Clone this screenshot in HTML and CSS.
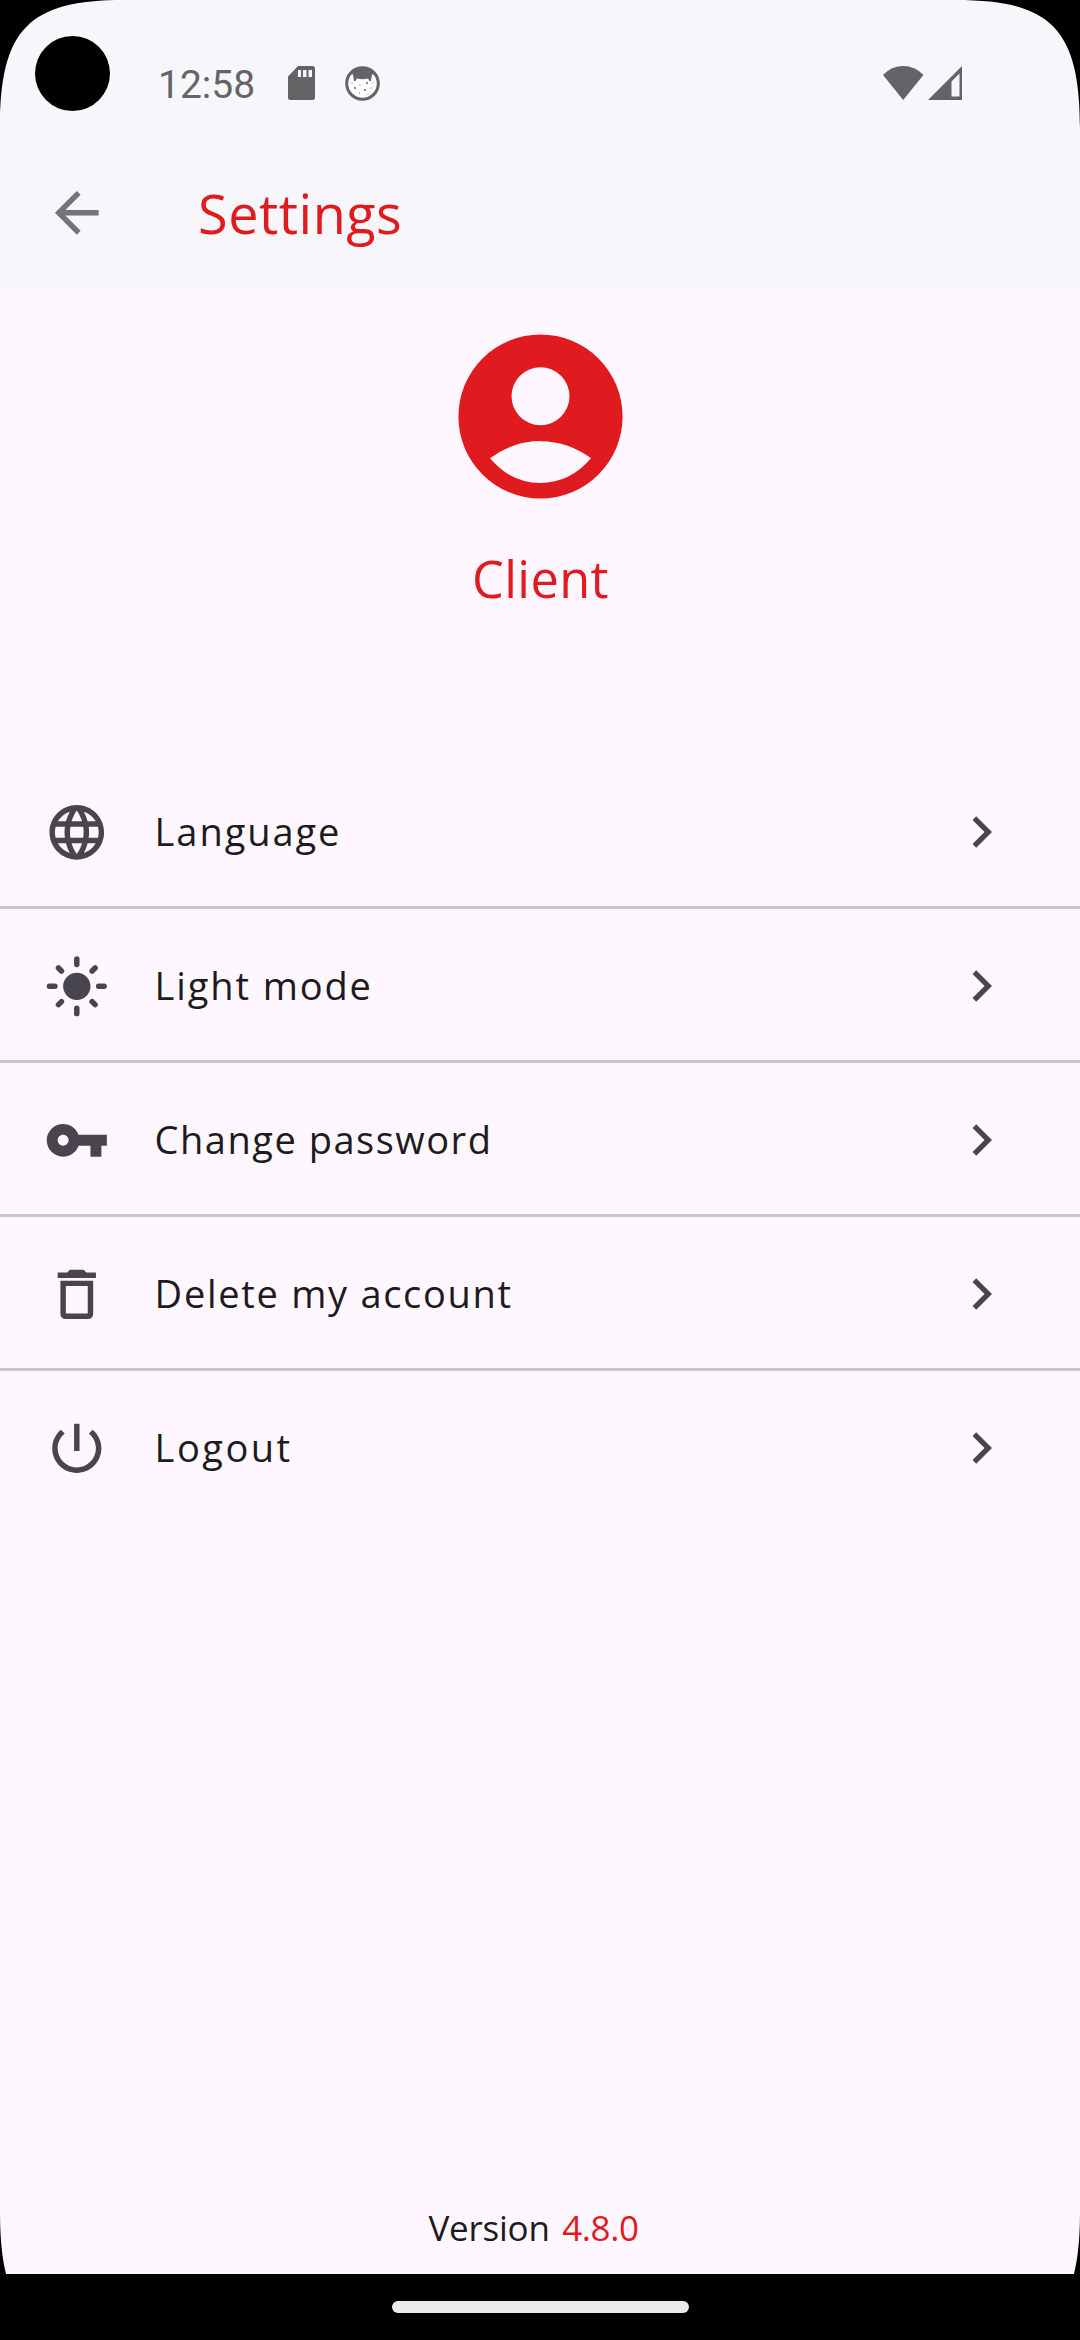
FILE: index.html
```
<!DOCTYPE html>
<html lang="en">
<head>
<meta charset="utf-8">
<title>Settings</title>
<link rel="stylesheet" href="styles.css">
</head>
<body>
<div class="screen">
  <header class="header">
    <div class="status-bar">
      <span class="clock">12:58</span>
      <svg class="sd-card" viewBox="0 0 27 34"><path fill-rule="evenodd" d="M10 0H24.5Q27 0 27 2.5V31.500Q27 34 24.500 34H2.500Q0 34 0 31.500V10.500ZM10 4V11H13V4ZM15 4V11H18.500V4ZM20.500 4V11H24V4Z"/></svg>
      <svg class="face" viewBox="0 0 35 35">
        <circle cx="17.500" cy="17.500" r="15.800" fill="#fdfdff" stroke="#646466" stroke-width="3"/>
        <path d="M4 8Q17.500-4.500 31 8L27 8.500 26 15H24.500L23 12.500Q17.500 14 12 12.500L10.500 15H9L8 8.500Z"/>
        <circle cx="22" cy="17" r="1"/><circle cx="10" cy="22" r="1"/><circle cx="20" cy="24" r="1"/><circle cx="15" cy="19" r=".6"/><circle cx="26" cy="22" r=".6"/><circle cx="14.500" cy="27" r=".6"/><circle cx="7" cy="17" r=".6"/><circle cx="23" cy="28" r=".5"/><circle cx="28" cy="17" r=".5"/>
      </svg>
      <svg class="wifi" viewBox="0 0 40.400 34"><path d="M20.200 34 0 9Q8.500 0 20.200 0T40.400 9Z"/></svg>
      <svg class="signal" viewBox="0 0 34 34"><path fill-rule="evenodd" d="M34 0V34H0ZM31.500 7.500 23.500 15.500V30.500H31.500Z"/></svg>
    </div>
    <div class="app-bar">
      <svg class="back" viewBox="0 0 24 24"><path d="M20 11H7.830l5.590-5.590L12 4l-8 8 8 8 1.410-1.410L7.830 13H20v-2z"/></svg>
      <h1 class="title">Settings</h1>
    </div>
  </header>

  <main class="content">
    <section class="profile">
      <svg class="avatar" viewBox="0 0 24 24"><path fill-rule="evenodd" d="M12 2a10 10 0 1 0 0 20a10 10 0 1 0 0-20ZM12 6a3.530 3.530 0 1 1 0 7.060a3.530 3.530 0 1 1 0-7.060ZM5.850 17.100q1.275-.975 2.850-1.538T12 15q1.725 0 3.300.563t2.850 1.537Q15.600 20.100 12 20.100T5.850 17.100Z"/></svg>
      <div class="name">Client</div>
    </section>

    <nav class="menu">
      <div class="item">
        <svg class="icon" viewBox="0 0 24 24"><path d="M11.990 2C6.470 2 2 6.480 2 12s4.470 10 9.990 10C17.520 22 22 17.520 22 12S17.520 2 11.990 2zm6.930 6h-2.950c-.32-1.250-.78-2.450-1.380-3.560 1.840.63 3.370 1.910 4.330 3.560zM12 4.040c.83 1.200 1.480 2.530 1.910 3.960h-3.820c.43-1.430 1.080-2.760 1.910-3.960zM4.260 14C4.100 13.360 4 12.690 4 12s.1-1.360.26-2h3.380c-.08.66-.14 1.320-.14 2s.06 1.340.14 2H4.260zm.82 2h2.950c.32 1.250.78 2.450 1.380 3.560-1.840-.63-3.370-1.900-4.330-3.560zm2.950-8H5.080c.96-1.660 2.490-2.930 4.330-3.560C8.810 5.550 8.350 6.750 8.030 8zM12 19.960c-.83-1.200-1.480-2.530-1.910-3.960h3.820c-.43 1.430-1.080 2.760-1.910 3.960zM14.340 14H9.660c-.09-.66-.16-1.320-.16-2s.07-1.350.16-2h4.680c.09.650.16 1.320.16 2s-.07 1.340-.16 2zm.25 5.560c.6-1.110 1.060-2.310 1.380-3.560h2.950c-.96 1.650-2.490 2.930-4.330 3.560zM16.360 14c.08-.66.14-1.320.14-2s-.06-1.340-.14-2h3.380c.16.64.26 1.310.26 2s-.1 1.360-.26 2h-3.380z"/></svg>
        <span class="label label-language">Language</span>
        <svg class="chevron" viewBox="0 0 24 24"><path d="M10 6 8.590 7.410 13.170 12l-4.580 4.590L10 18l6-6z"/></svg>
      </div>
      <div class="item">
        <svg class="icon" viewBox="0 0 24 24"><circle cx="12" cy="12" r="5"/><path fill="none" stroke="#49454f" stroke-width="2" stroke-linecap="round" d="M12 2V4M12 20V22M2 12H4M20 12H22M5.300 5.300 6.400 6.400M17.600 17.600 18.700 18.700M18.700 5.300 17.600 6.400M6.400 17.600 5.300 18.700"/></svg>
        <span class="label label-mode">Light mode</span>
        <svg class="chevron" viewBox="0 0 24 24"><path d="M10 6 8.590 7.410 13.170 12l-4.580 4.590L10 18l6-6z"/></svg>
      </div>
      <div class="item">
        <svg class="icon" viewBox="0 0 24 24"><path d="M12.650 10C11.830 7.670 9.610 6 7 6c-3.310 0-6 2.690-6 6s2.690 6 6 6c2.610 0 4.830-1.670 5.650-4H17v4h4v-4h2v-4H12.650zM7 14c-1.100 0-2-.9-2-2s.9-2 2-2 2 .9 2 2-.9 2-2 2z"/></svg>
        <span class="label label-password">Change password</span>
        <svg class="chevron" viewBox="0 0 24 24"><path d="M10 6 8.590 7.410 13.170 12l-4.580 4.590L10 18l6-6z"/></svg>
      </div>
      <div class="item">
        <svg class="icon" viewBox="0 0 24 24"><path fill-rule="evenodd" d="M5 4H8.500L9.500 3H14.500L15.500 4H19V6H5ZM6 7H18V19Q18 21 16 21H8Q6 21 6 19ZM8 9V19H16V9Z"/></svg>
        <span class="label label-delete">Delete my account</span>
        <svg class="chevron" viewBox="0 0 24 24"><path d="M10 6 8.590 7.410 13.170 12l-4.580 4.590L10 18l6-6z"/></svg>
      </div>
      <div class="item">
        <svg class="icon" viewBox="0 0 24 24"><path d="M13 3h-2v10h2V3zm4.830 2.170-1.420 1.420C17.990 7.860 19 9.810 19 12c0 3.870-3.130 7-7 7s-7-3.130-7-7c0-2.190 1.010-4.140 2.580-5.420L6.170 5.170C4.230 6.820 3 9.260 3 12c0 4.970 4.030 9 9 9s9-4.030 9-9c0-2.740-1.230-5.180-3.170-6.830z"/></svg>
        <span class="label label-logout">Logout</span>
        <svg class="chevron" viewBox="0 0 24 24"><path d="M10 6 8.590 7.410 13.170 12l-4.580 4.590L10 18l6-6z"/></svg>
      </div>
    </nav>

    <footer class="version"><span>Version</span><span class="number">4.8.0</span></footer>
  </main>

  <div class="nav-bar"><div class="handle"></div></div>

  <svg class="bezel" viewBox="0 0 1080 2340">
    <path d="M0 0H124C29 0 0 29 0 128ZM1080 0H956C1051 0 1080 29 1080 128ZM0 2340V2212C0 2311 29 2340 124 2340ZM1080 2340V2212C1080 2311 1051 2340 956 2340Z"/>
    <circle cx="72.500" cy="73.500" r="37.500"/>
  </svg>
</div>
</body>
</html>
```
FILE: styles.css
```
* {
  box-sizing: border-box;
}

body {
  margin: 0;
  font-family: "Open Sans", "Noto Sans", sans-serif;
  color: #1d1b20;
}

svg {
  display: block;
  flex: none;
}

.screen {
  position: relative;
  display: flex;
  flex-direction: column;
  width: 1080px;
  height: 2340px;
  background: #fef7ff;
  overflow: hidden;
}

.header {
  height: 289px;
  background: #f7f7fb;
}

.status-bar {
  display: flex;
  align-items: center;
  height: 137px;
  padding: 29px 118px 0 158px;
  fill: #646466;
}

.clock {
  width: 130px;
  font: 39px/44px Roboto, sans-serif;
  padding-top: 4px;
  color: #646466;
}

.sd-card {
  width: 27px;
  height: 34px;
}

.face {
  width: 35px;
  height: 35px;
  margin-left: 30px;
}

.wifi {
  width: 40.400px;
  height: 34px;
  margin-left: auto;
}

.signal {
  width: 34px;
  height: 34px;
  margin-left: 4.500px;
}

.app-bar {
  display: flex;
  align-items: center;
  height: 152px;
  padding-left: 44px;
}

.back {
  width: 65.600px;
  height: 65.600px;
  fill: #757577;
}

.title {
  margin: 0 0 0 88.500px;
  font-size: 54px;
  font-weight: 400;
  line-height: 74px;
  letter-spacing: 0.5px;
  color: #e01b1f;
}

.content {
  display: flex;
  flex-direction: column;
  height: 1985px;
}

.profile {
  display: flex;
  flex-direction: column;
  align-items: center;
  height: 466px;
  padding-top: 29px;
}

.avatar {
  width: 197px;
  height: 197px;
  fill: #e01b1f;
}

.name {
  margin-top: 29px;
  padding-left: 1px;
  font-size: 50.500px;
  line-height: 70px;
  letter-spacing: 0.370px;
  color: #e01b1f;
}

.item {
  display: flex;
  align-items: center;
  height: 154px;
  padding: 0 67.500px 0 44px;
  border-bottom: 3px solid #cac4d0;
  fill: #49454f;
}

.item > * {
  transform: translateY(1.500px);
}

.item:last-child {
  border-bottom-color: transparent;
}

.icon {
  width: 65.600px;
  height: 65.600px;
}

.label {
  margin-left: 45px;
  padding-bottom: 4px;
  font-size: 38px;
  line-height: 52px;
}

.label-language { letter-spacing: 1.940px; }
.label-mode { letter-spacing: 1.880px; }
.label-password { letter-spacing: 1.510px; }
.label-delete { letter-spacing: 1.710px; }
.label-logout { letter-spacing: 2.500px; }

.chevron {
  width: 63px;
  height: 63px;
  margin-left: auto;
}

.version {
  display: flex;
  justify-content: center;
  gap: 12.500px;
  margin-top: auto;
  padding: 0 13px 22px 0;
  font-size: 35px;
  line-height: 48px;
  letter-spacing: -0.230px;
}

.number {
  letter-spacing: -0.400px;
  color: #e01b1f;
}

.nav-bar {
  display: flex;
  justify-content: center;
  height: 66px;
  padding-top: 27px;
  background: #000;
}

.handle {
  width: 297px;
  height: 12px;
  border-radius: 6px;
  background: #ebebeb;
}

.bezel {
  position: absolute;
  inset: 0;
  width: 1080px;
  height: 2340px;
}
```
